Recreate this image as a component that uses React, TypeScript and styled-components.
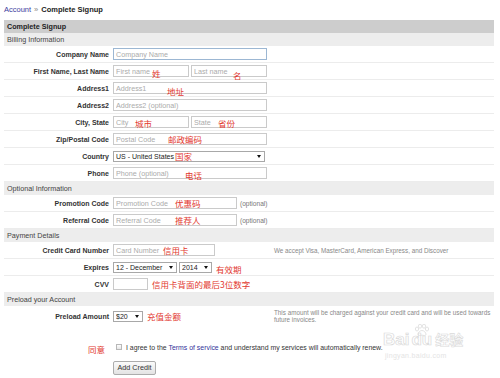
import React from "react";
import styled, {createGlobalStyle} from "styled-components";

const GlobalStyle = createGlobalStyle`
  html, body {
    margin: 0;
    padding: 0;
    background: #fff;
  }
  body {
    font-family: "Liberation Sans", Arial, "Noto Sans CJK SC", sans-serif;
    color: #333;
  }
`;

type Mark = {text: string; x: number; y: number};

const Field = ({
  label,
  children,
  note,
  marks = [],
}: {
  label: string;
  children: React.ReactNode;
  note?: React.ReactNode;
  marks?: Mark[];
}) => (
  <Row>
    <Label>{label}</Label>
    <Control>{children}</Control>
    <Hint>{note}</Hint>
    {marks.map((m) => (
      <Mark key={m.text} $x={m.x} $y={m.y}>
        {m.text}
      </Mark>
    ))}
  </Row>
);

const Dropdown = ({value, width}: {value: string; width: number}) => (
  <SelectWrap $w={width}>
    <Select defaultValue={value}>
      <option>{value}</option>
    </Select>
    <Arrow />
  </SelectWrap>
);

const Paw = () => (
  <svg width="16" height="12" viewBox="0 0 16 12" fill="none" stroke="#dcdcdc" strokeWidth="0.8">
    <ellipse cx="3" cy="5" rx="1.6" ry="2" />
    <ellipse cx="6" cy="2.2" rx="1.6" ry="2" />
    <ellipse cx="10" cy="2.2" rx="1.6" ry="2" />
    <ellipse cx="13" cy="5" rx="1.6" ry="2" />
    <path d="M8 6.5c-2.2 0-4 2.3-4 3.8 0 1.2 1.2 1.4 2 1.2.8-.2 1.3-.3 2-.3s1.2.1 2 .3c.8.2 2-.1 2-1.2 0-1.5-1.8-3.8-4-3.8z" />
  </svg>
);

const App = () => {
  return (
    <Page>
      <GlobalStyle />
      <Crumbs>
        <CrumbLink>Account</CrumbLink>
        <CrumbSep>»</CrumbSep>
        <CrumbCurrent>Complete Signup</CrumbCurrent>
      </Crumbs>

      <Title>Complete Signup</Title>

      <Section>Billing Information</Section>
      <Field label="Company Name">
        <TextInput $w={154} $focus placeholder="Company Name" />
      </Field>
      <Field
        label="First Name, Last Name"
        marks={[
          {text: "姓", x: 148, y: 5},
          {text: "名", x: 229, y: 7},
        ]}
      >
        <TextInput $w={76} placeholder="First name" />
        <TextInput $w={76} placeholder="Last name" />
      </Field>
      <Field label="Address1" marks={[{text: "地址", x: 163, y: 6}]}>
        <TextInput $w={154} placeholder="Address1" />
      </Field>
      <Field label="Address2">
        <TextInput $w={154} placeholder="Address2 (optional)" />
      </Field>
      <Field
        label="City, State"
        marks={[
          {text: "城市", x: 131, y: 4},
          {text: "省份", x: 214, y: 4},
        ]}
      >
        <TextInput $w={76} placeholder="City" />
        <TextInput $w={76} placeholder="State" />
      </Field>
      <Field label="Zip/Postal Code" marks={[{text: "邮政编码", x: 164, y: 3}]}>
        <TextInput $w={154} placeholder="Postal Code" />
      </Field>
      <Field label="Country" marks={[{text: "国家", x: 171, y: 3}]}>
        <Dropdown value="US - United States" width={152} />
      </Field>
      <Field label="Phone" marks={[{text: "电话", x: 181, y: 5}]}>
        <TextInput $w={154} placeholder="Phone (optional)" />
      </Field>

      <Section>Optional Information</Section>
      <Field label="Promotion Code" marks={[{text: "优惠码", x: 171, y: 3}]}>
        <TextInput $w={124} placeholder="Promotion Code" />
        <Optional>(optional)</Optional>
      </Field>
      <Field label="Referral Code" marks={[{text: "推荐人", x: 171, y: 3}]}>
        <TextInput $w={124} placeholder="Referral Code" />
        <Optional>(optional)</Optional>
      </Field>

      <Section>Payment Details</Section>
      <Field
        label="Credit Card Number"
        note="We accept Visa, MasterCard, American Express, and Discover"
        marks={[{text: "信用卡", x: 159, y: 3}]}
      >
        <TextInput $w={102} placeholder="Card Number" />
      </Field>
      <Field label="Expires" marks={[{text: "有效期", x: 212, y: 5}]}>
        <Dropdown value="12 - December" width={64} />
        <Dropdown value="2014" width={33} />
      </Field>
      <Field label="CVV" marks={[{text: "信用卡背面的最后3位数字", x: 148, y: 3}]}>
        <TextInput $w={35} />
      </Field>

      <Section>Preload your Account</Section>
      <PreloadRow>
        <Label>Preload Amount</Label>
        <Control>
          <Dropdown value="$20" width={30} />
        </Control>
        <Hint>
          This amount will be charged against your credit card and will be used towards
          future invoices.
        </Hint>
        <Mark $x={143} $y={5}>
          充值金额
        </Mark>
      </PreloadRow>

      <AgreeRow>
        <Mark $x={84} $y={2}>
          同意
        </Mark>
        <Agree>
          <Check type="checkbox" />
          I agree to the <TermsLink>Terms of service</TermsLink> and understand my services
          will automatically renew.
        </Agree>
      </AgreeRow>

      <ButtonRow>
        <SubmitButton type="button">Add Credit</SubmitButton>
      </ButtonRow>

      <Watermark>
        <PawSpot>
          <Paw />
        </PawSpot>
        <WmBrand>
          Bai<WmDu>du</WmDu>
          <WmCn>经验</WmCn>
        </WmBrand>
        <WmUrl>jingyan.baidu.com</WmUrl>
      </Watermark>
    </Page>
  );
};

const Page = styled.div`
  position: relative;
  width: 490px;
  height: 378px;
  padding: 0 6px 0 4px;
`;

const Crumbs = styled.div`
  height: 20px;
  padding-bottom: 2px;
  box-sizing: border-box;
  display: flex;
  align-items: center;
  font-size: 7.5px;
`;

const CrumbLink = styled.span`
  color: #3c3ca0;
`;

const CrumbSep = styled.span`
  color: #888;
  margin: 0 3px;
`;

const CrumbCurrent = styled.span`
  font-weight: 700;
  color: #222;
`;

const Title = styled.div`
  height: 13px;
  line-height: 13px;
  padding-left: 3px;
  background: #cdcdcd;
  font-size: 7.2px;
  font-weight: 700;
  color: #222;
`;

const Section = styled.div`
  height: 13px;
  line-height: 13px;
  padding-left: 3px;
  background: #ededed;
  font-size: 7.2px;
  color: #444;
`;

const Row = styled.div`
  position: relative;
  display: grid;
  grid-template-columns: 109px 157px 1fr;
  align-items: center;
  height: 17px;
  box-sizing: border-box;
  border-bottom: 1px solid #ececec;
`;

const PreloadRow = styled(Row)`
  height: 20px;
  border-bottom: none;
`;

const Label = styled.div`
  text-align: right;
  padding-right: 4px;
  font-size: 7px;
  font-weight: 700;
  color: #333;
  white-space: nowrap;
`;

const Control = styled.div`
  display: flex;
  align-items: center;
  gap: 2px;
`;

const Hint = styled.div`
  padding-left: 4px;
  font-size: 6.3px;
  line-height: 7px;
  color: #888;
`;

const Optional = styled.span`
  margin-left: 1px;
  font-size: 6.6px;
  color: #777;
  white-space: nowrap;
`;

const TextInput = styled.input<{$w: number; $focus?: boolean}>`
  width: ${(p) => p.$w}px;
  height: 12px;
  box-sizing: border-box;
  margin: 0;
  padding: 0 2px;
  border: 1px solid ${(p) => (p.$focus ? "#9cb7d3" : "#cacaca")};
  border-radius: 0;
  font-family: inherit;
  font-size: 7.2px;
  color: #333;
  background: #fff;
  outline: none;

  &::placeholder {
    color: #ababab;
  }
`;

const SelectWrap = styled.span<{$w: number}>`
  position: relative;
  display: flex;
  flex: none;
  width: ${(p) => p.$w}px;
  height: 11px;
`;

const Select = styled.select`
  appearance: none;
  display: block;
  width: 100%;
  height: 11px;
  min-height: 0;
  box-sizing: border-box;
  margin: 0;
  padding: 0 0 0 2px;
  border: 1px solid #a8a8a8;
  border-radius: 0;
  background: #fff;
  font-family: inherit;
  font-size: 7px;
  line-height: 9px;
  color: #222;
  outline: none;
`;

const Arrow = styled.span`
  position: absolute;
  right: 4px;
  top: 4px;
  width: 0;
  height: 0;
  border-left: 2px solid transparent;
  border-right: 2px solid transparent;
  border-top: 3px solid #111;
`;

const Mark = styled.span<{$x: number; $y: number}>`
  position: absolute;
  left: ${(p) => p.$x}px;
  top: ${(p) => p.$y}px;
  font-family: "Noto Sans CJK SC", sans-serif;
  font-size: 8.5px;
  line-height: 10px;
  color: #e2392f;
  white-space: nowrap;
  pointer-events: none;
`;

const AgreeRow = styled.div`
  position: relative;
  display: grid;
  grid-template-columns: 109px 1fr;
  align-items: center;
  height: 10px;
  margin-top: 16px;
`;

const Agree = styled.label`
  grid-column: 2;
  display: flex;
  align-items: center;
  font-size: 6.9px;
  color: #333;
  white-space: pre;
`;

const Check = styled.input`
  appearance: none;
  width: 6px;
  height: 6px;
  margin: 0 4px 0 3px;
  border: 1px solid #b8b8b8;
  background: linear-gradient(#fdfdfd, #e6e6e6);
`;

const TermsLink = styled.span`
  color: #33339a;
`;

const ButtonRow = styled.div`
  padding-left: 109px;
  margin-top: 4px;
`;

const SubmitButton = styled.button`
  width: 43px;
  height: 14px;
  padding: 0;
  border: 1px solid #acacac;
  border-radius: 2px;
  background: linear-gradient(#fbfbfb, #e3e3e3);
  font-family: inherit;
  font-size: 7.2px;
  color: #333;
`;

const Watermark = styled.div`
  position: absolute;
  left: 383px;
  top: 322px;
  width: 92px;
  pointer-events: none;
`;

const PawSpot = styled.div`
  position: absolute;
  left: 31px;
  top: 0;
`;

const WmBrand = styled.div`
  display: flex;
  align-items: flex-end;
  margin-top: 10px;
  height: 15px;
  font-family: "Liberation Sans", Arial, sans-serif;
  font-size: 17px;
  line-height: 15px;
  font-weight: 700;
  color: transparent;
  -webkit-text-stroke: 0.7px #dadada;
`;

const WmDu = styled.span`
  margin-left: 2px;
`;

const WmCn = styled.span`
  margin-left: 3px;
  font-family: "Noto Sans CJK SC", sans-serif;
  font-size: 14px;
  line-height: 15px;
  -webkit-text-stroke: 0.6px #dadada;
`;

const WmUrl = styled.div`
  margin-top: 5px;
  padding-left: 2px;
  font-size: 7px;
  letter-spacing: 0.3px;
  color: #e4e4e4;
`;

export default App;
